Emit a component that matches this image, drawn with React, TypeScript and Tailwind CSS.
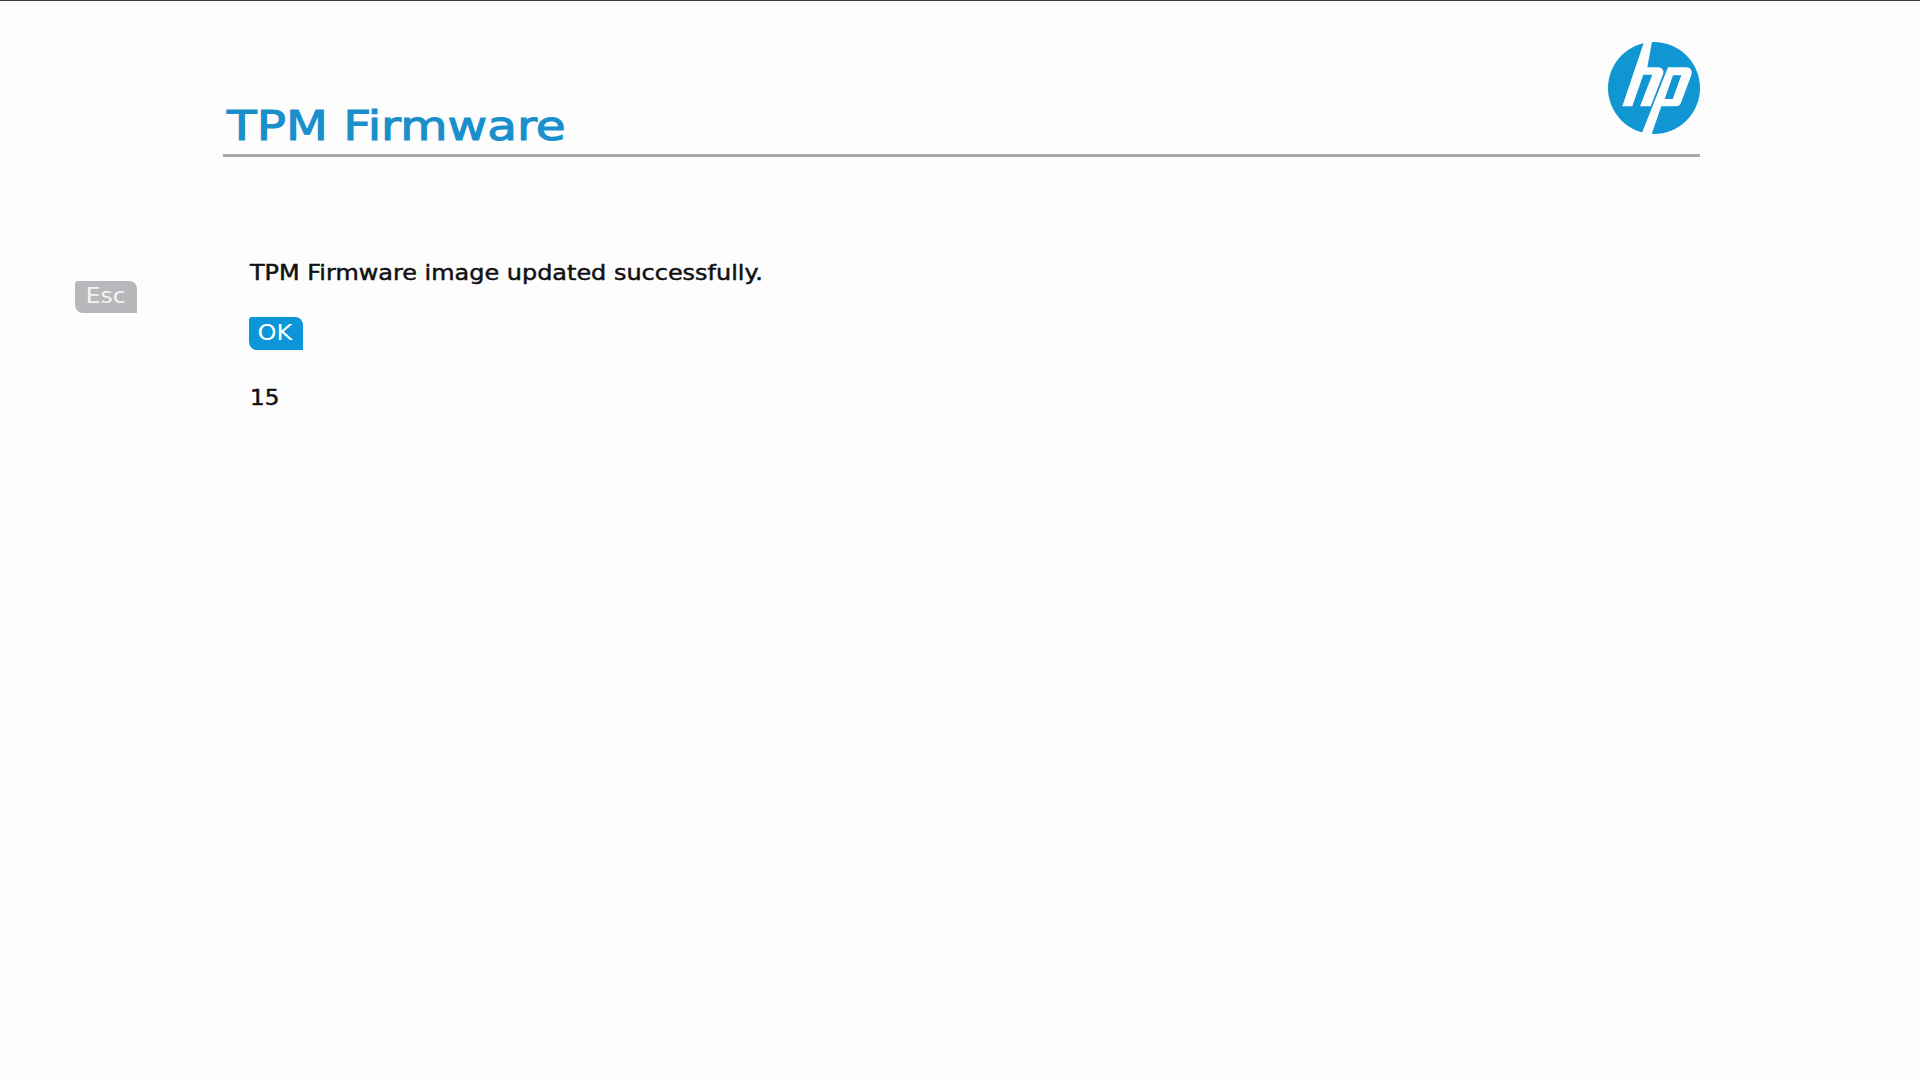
export default function App() {
  return (
    <div className="min-h-screen bg-[#fdfdfd] border-t border-[#3a3a3a] flex font-['DejaVu_Sans',sans-serif]">
      <div className="w-[223px] pl-[75px] pt-[280px]">
        <div className="w-[62px] h-[32px] bg-[#b8b8bc] text-[#f4f4f4] text-[22px] leading-[30px] text-center rounded-tr-[8px] rounded-bl-[8px] rounded-tl-[3px]">
          <span className="inline-block scale-x-[1.07]">Esc</span>
        </div>
      </div>
      <div className="w-[1477px]">
        <div className="h-[156px] border-b-[3px] border-[#a9a9a9] flex justify-between">
          <h1 className="mt-[100px] ml-[4px] text-[41px] leading-[50px] font-normal text-[#1a8fcb] origin-left scale-x-[1.184] [-webkit-text-stroke:1.1px_#1a8fcb]">TPM Firmware</h1>
          <svg className="mt-[41px] w-[92px] h-[92px]" viewBox="0 0 92 92">
            <circle cx="46" cy="46" r="46" fill="#1196d4" />
            <path fill="#fdfdfd" d="M36 0H44L39.3 25.3H49.3C54 25.3 56.5 28 55 32.5L42.7 64.3H32L44.3 32.7H35.3L24.3 64.3H14.3Z" />
            <path fill="#fdfdfd" fillRule="evenodd" d="M60 25.3H78C82.5 25.3 84.8 28.5 83.3 33L73.3 60C72.3 63 70.5 64.3 68 64.3H53.3L43.7 92H33.5ZM65 33.3H73.3L64.7 57H56.7Z" />
          </svg>
        </div>
        <div className="pl-[26px] pt-[101px] text-[22px] leading-[30px] text-[#111]">
          <p className="ml-[1px] origin-left scale-x-[1.088] [-webkit-text-stroke:0.5px_#111]">TPM Firmware image updated successfully.</p>
          <div className="mt-[29px] w-[54px] h-[33px] pr-[2px] pt-[1px] bg-[#0a96d8] text-white text-center rounded-tr-[8px] rounded-bl-[8px] rounded-tl-[3px]">
            <span className="inline-block scale-x-[1.1]">OK</span>
          </div>
          <p className="ml-[1px] mt-[33px] origin-left scale-x-[1.05] [-webkit-text-stroke:0.5px_#111]">15</p>
        </div>
      </div>
    </div>
  );
}
